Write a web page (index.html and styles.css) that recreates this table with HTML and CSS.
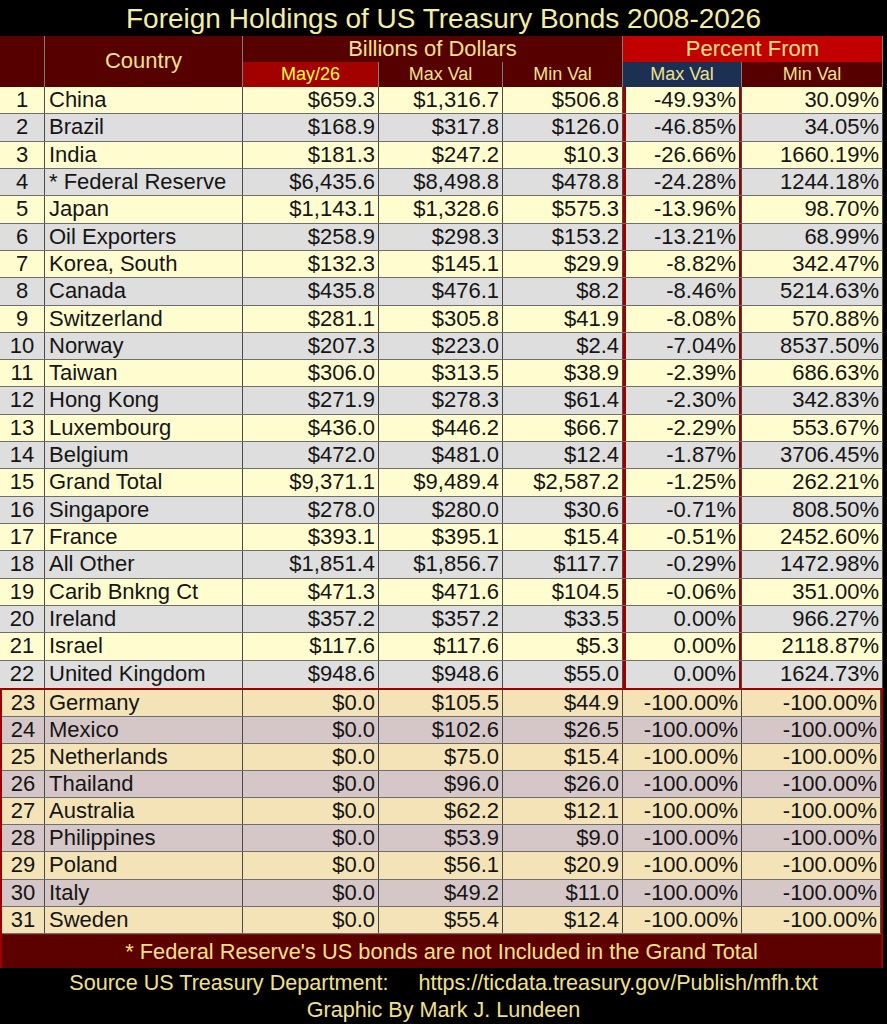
FILE: index.html
```html
<!DOCTYPE html>
<html lang="en">
<head>
<meta charset="utf-8">
<title>Foreign Holdings of US Treasury Bonds 2008-2026</title>
<link rel="stylesheet" href="styles.css">
</head>
<body>
<div class="title">Foreign Holdings of US Treasury Bonds 2008-2026</div>
<div class="sheet">
  <div class="head">
    <div class="h-num"></div>
    <div class="h-country">Country</div>
    <div class="h-billions">Billions of Dollars</div>
    <div class="h-percent">Percent From</div>
    <div class="sub may">May/26</div>
    <div class="sub">Max Val</div>
    <div class="sub">Min Val</div>
    <div class="sub navy">Max Val</div>
    <div class="sub">Min Val</div>
  </div>

  <div class="top">
    <div class="row y"><span class="c-num">1</span><span class="c-name">China</span><span>$659.3</span><span>$1,316.7</span><span>$506.8</span><span class="hl first">-49.93%</span><span>30.09%</span></div>
    <div class="row g"><span class="c-num">2</span><span class="c-name">Brazil</span><span>$168.9</span><span>$317.8</span><span>$126.0</span><span class="hl">-46.85%</span><span>34.05%</span></div>
    <div class="row y"><span class="c-num">3</span><span class="c-name">India</span><span>$181.3</span><span>$247.2</span><span>$10.3</span><span class="hl">-26.66%</span><span>1660.19%</span></div>
    <div class="row g"><span class="c-num">4</span><span class="c-name">* Federal Reserve</span><span>$6,435.6</span><span>$8,498.8</span><span>$478.8</span><span class="hl">-24.28%</span><span>1244.18%</span></div>
    <div class="row y"><span class="c-num">5</span><span class="c-name">Japan</span><span>$1,143.1</span><span>$1,328.6</span><span>$575.3</span><span class="hl">-13.96%</span><span>98.70%</span></div>
    <div class="row g"><span class="c-num">6</span><span class="c-name">Oil Exporters</span><span>$258.9</span><span>$298.3</span><span>$153.2</span><span class="hl">-13.21%</span><span>68.99%</span></div>
    <div class="row y"><span class="c-num">7</span><span class="c-name">Korea, South</span><span>$132.3</span><span>$145.1</span><span>$29.9</span><span class="hl">-8.82%</span><span>342.47%</span></div>
    <div class="row g"><span class="c-num">8</span><span class="c-name">Canada</span><span>$435.8</span><span>$476.1</span><span>$8.2</span><span class="hl">-8.46%</span><span>5214.63%</span></div>
    <div class="row y"><span class="c-num">9</span><span class="c-name">Switzerland</span><span>$281.1</span><span>$305.8</span><span>$41.9</span><span class="hl">-8.08%</span><span>570.88%</span></div>
    <div class="row g"><span class="c-num">10</span><span class="c-name">Norway</span><span>$207.3</span><span>$223.0</span><span>$2.4</span><span class="hl">-7.04%</span><span>8537.50%</span></div>
    <div class="row y"><span class="c-num">11</span><span class="c-name">Taiwan</span><span>$306.0</span><span>$313.5</span><span>$38.9</span><span class="hl">-2.39%</span><span>686.63%</span></div>
    <div class="row g"><span class="c-num">12</span><span class="c-name">Hong Kong</span><span>$271.9</span><span>$278.3</span><span>$61.4</span><span class="hl">-2.30%</span><span>342.83%</span></div>
    <div class="row y"><span class="c-num">13</span><span class="c-name">Luxembourg</span><span>$436.0</span><span>$446.2</span><span>$66.7</span><span class="hl">-2.29%</span><span>553.67%</span></div>
    <div class="row g"><span class="c-num">14</span><span class="c-name">Belgium</span><span>$472.0</span><span>$481.0</span><span>$12.4</span><span class="hl">-1.87%</span><span>3706.45%</span></div>
    <div class="row y"><span class="c-num">15</span><span class="c-name">Grand Total</span><span>$9,371.1</span><span>$9,489.4</span><span>$2,587.2</span><span class="hl">-1.25%</span><span>262.21%</span></div>
    <div class="row g"><span class="c-num">16</span><span class="c-name">Singapore</span><span>$278.0</span><span>$280.0</span><span>$30.6</span><span class="hl">-0.71%</span><span>808.50%</span></div>
    <div class="row y"><span class="c-num">17</span><span class="c-name">France</span><span>$393.1</span><span>$395.1</span><span>$15.4</span><span class="hl">-0.51%</span><span>2452.60%</span></div>
    <div class="row g"><span class="c-num">18</span><span class="c-name">All Other</span><span>$1,851.4</span><span>$1,856.7</span><span>$117.7</span><span class="hl">-0.29%</span><span>1472.98%</span></div>
    <div class="row y"><span class="c-num">19</span><span class="c-name">Carib Bnkng Ct</span><span>$471.3</span><span>$471.6</span><span>$104.5</span><span class="hl">-0.06%</span><span>351.00%</span></div>
    <div class="row g"><span class="c-num">20</span><span class="c-name">Ireland</span><span>$357.2</span><span>$357.2</span><span>$33.5</span><span class="hl">0.00%</span><span>966.27%</span></div>
    <div class="row y"><span class="c-num">21</span><span class="c-name">Israel</span><span>$117.6</span><span>$117.6</span><span>$5.3</span><span class="hl">0.00%</span><span>2118.87%</span></div>
    <div class="row g last"><span class="c-num">22</span><span class="c-name">United Kingdom</span><span>$948.6</span><span>$948.6</span><span>$55.0</span><span class="hl">0.00%</span><span>1624.73%</span></div>
  </div>

  <div class="block">
    <div class="row t"><span class="c-num">23</span><span class="c-name">Germany</span><span>$0.0</span><span>$105.5</span><span>$44.9</span><span>-100.00%</span><span>-100.00%</span></div>
    <div class="row m"><span class="c-num">24</span><span class="c-name">Mexico</span><span>$0.0</span><span>$102.6</span><span>$26.5</span><span>-100.00%</span><span>-100.00%</span></div>
    <div class="row t"><span class="c-num">25</span><span class="c-name">Netherlands</span><span>$0.0</span><span>$75.0</span><span>$15.4</span><span>-100.00%</span><span>-100.00%</span></div>
    <div class="row m"><span class="c-num">26</span><span class="c-name">Thailand</span><span>$0.0</span><span>$96.0</span><span>$26.0</span><span>-100.00%</span><span>-100.00%</span></div>
    <div class="row t"><span class="c-num">27</span><span class="c-name">Australia</span><span>$0.0</span><span>$62.2</span><span>$12.1</span><span>-100.00%</span><span>-100.00%</span></div>
    <div class="row m"><span class="c-num">28</span><span class="c-name">Philippines</span><span>$0.0</span><span>$53.9</span><span>$9.0</span><span>-100.00%</span><span>-100.00%</span></div>
    <div class="row t"><span class="c-num">29</span><span class="c-name">Poland</span><span>$0.0</span><span>$56.1</span><span>$20.9</span><span>-100.00%</span><span>-100.00%</span></div>
    <div class="row m"><span class="c-num">30</span><span class="c-name">Italy</span><span>$0.0</span><span>$49.2</span><span>$11.0</span><span>-100.00%</span><span>-100.00%</span></div>
    <div class="row t"><span class="c-num">31</span><span class="c-name">Sweden</span><span>$0.0</span><span>$55.4</span><span>$12.4</span><span>-100.00%</span><span>-100.00%</span></div>
    <div class="note">* Federal Reserve's US bonds are not Included in the Grand Total</div>
  </div>
</div>
<div class="source">Source US Treasury Department: <span class="url">https://ticdata.treasury.gov/Publish/mfh.txt</span></div>
<div class="credit">Graphic By Mark J. Lundeen</div>
</body>
</html>
```

FILE: styles.css
```css
* { box-sizing: border-box; }

body {
  margin: 0;
  width: 887px;
  height: 1024px;
  background: #000;
  font-family: "Liberation Sans", Arial, sans-serif;
  overflow: hidden;
}

.title {
  height: 36px;
  line-height: 38px;
  text-align: center;
  color: #f4eea0;
  font-size: 28px;
}

.sheet { width: 883px; }

.head {
  display: grid;
  grid-template-columns: 45px 198px 136px 124px 120px 119px 141px;
  grid-template-rows: 26px 25px;
  background: #560000;
  color: #f0e08c;
}

.head > div {
  display: flex;
  align-items: center;
  justify-content: center;
  border-right: 1px solid #7d7d7d;
}

.h-num { grid-row: 1 / 3; }
.h-country { grid-row: 1 / 3; font-size: 22px; padding-bottom: 2px; }
.h-billions { grid-column: 3 / 6; font-size: 22px; }
.h-percent { grid-column: 6 / 8; font-size: 22px; background: #c20000; }

.sub { font-size: 18px; }
.sub.may { background: #a30000; color: #ffff3a; }
.sub.navy { background: #1b3052; }

.row {
  display: grid;
  grid-template-columns: 45px 198px 136px 124px 120px 119px 141px;
  height: 27.32px;
  font-size: 22px;
  color: #151515;
  border-bottom: 1px solid #6e6e6e;
}

.row > span {
  display: block;
  padding: 0 3px;
  text-align: right;
  line-height: 26px;
  white-space: nowrap;
  overflow: hidden;
  border-right: 1px solid #4a4a4a;
}

.row > .c-num { text-align: center; padding: 0; }
.row > .c-name { text-align: left; padding-left: 4px; }

.row.y { background: #fffdcf; }
.row.g { background: #dedede; }
.row.t { background: #f3e3b6; }
.row.m { background: #d5c6c8; }

.row .hl {
  box-shadow: inset 3px 0 #9c0000, inset -2px 0 #9c0000;
  padding-right: 5px;
}

.row.last { border-bottom: 0; }

.block {
  border: 2px solid #9c0000;
  border-bottom: 0;
}

.block .row {
  grid-template-columns: 43px 198px 136px 124px 120px 119px 139px;
  height: 27.1px;
}

.block .row.m:last-of-type { border-bottom: 0; }

.note {
  height: 34px;
  line-height: 34px;
  text-align: center;
  background: #5c0000;
  color: #f0e08c;
  font-size: 21.8px;
  border-top: 1px solid #7a1010;
}

.source, .credit {
  text-align: center;
  color: #f0e08c;
  font-size: 21.6px;
  height: 27px;
  line-height: 27px;
}

.source { margin-top: 1px; }

.url { margin-left: 24px; }
```
